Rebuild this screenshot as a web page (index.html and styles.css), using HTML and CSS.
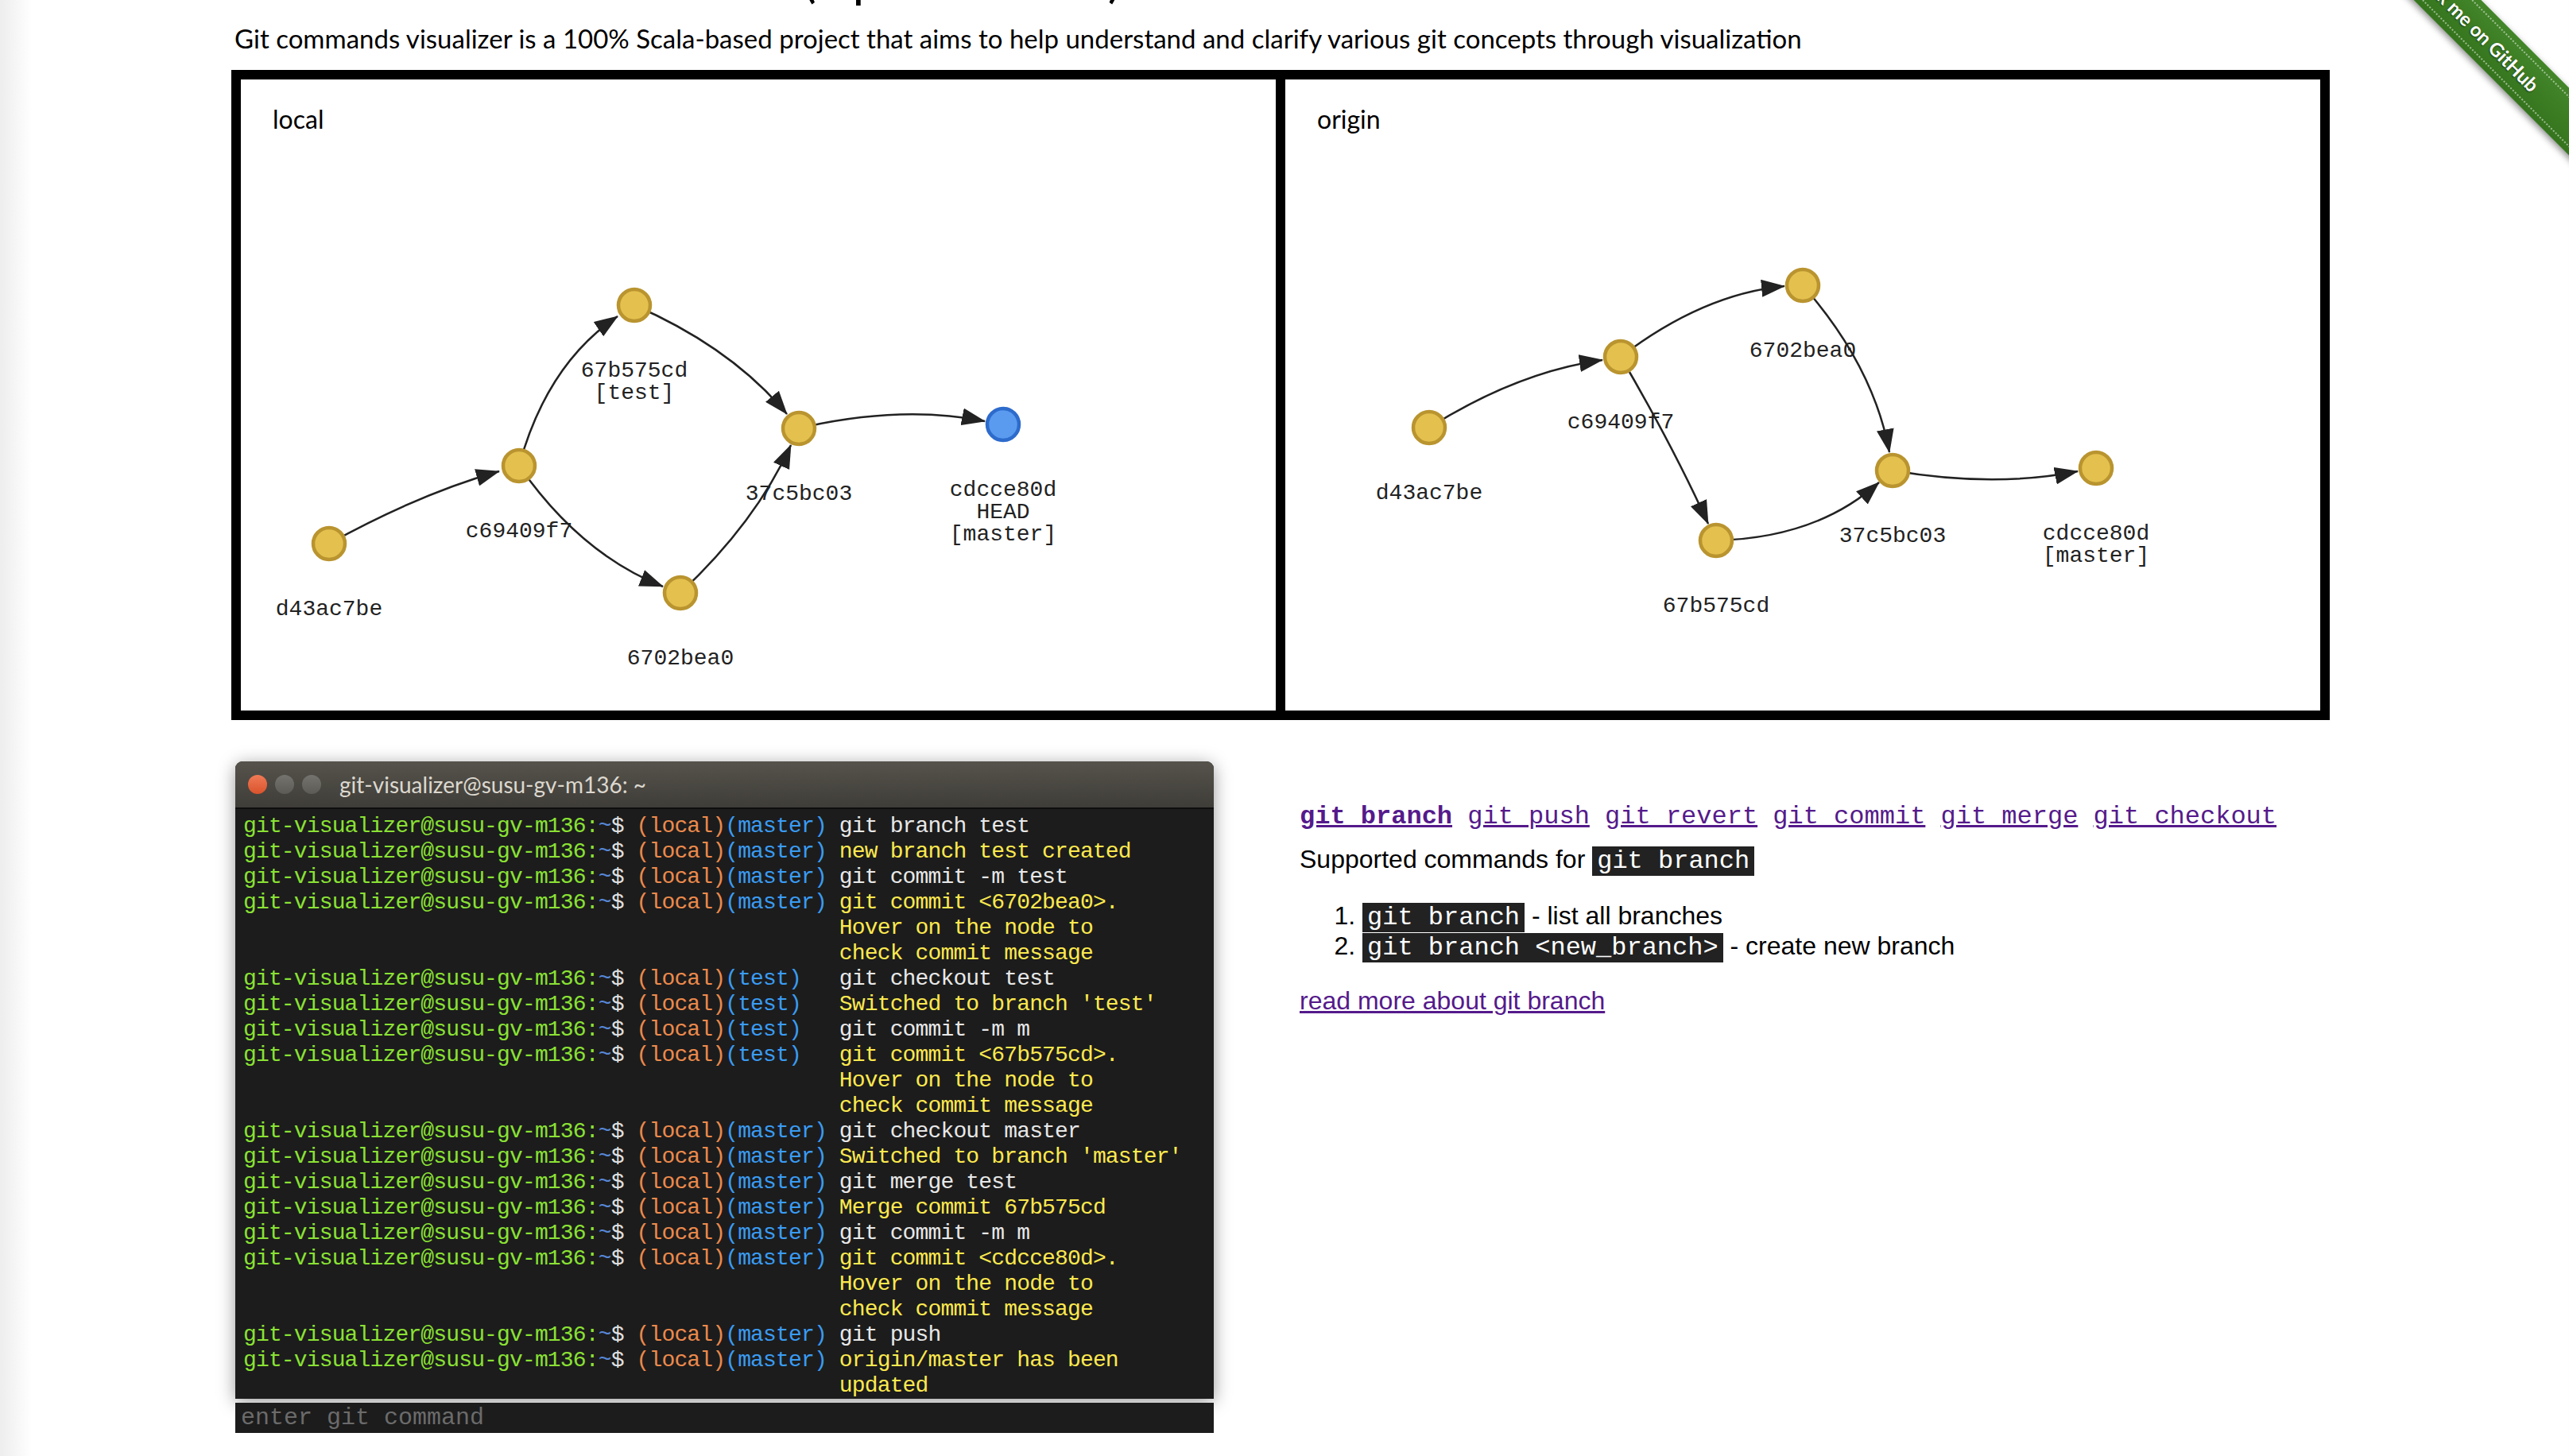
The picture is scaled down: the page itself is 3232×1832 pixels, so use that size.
FILE: index.html
```html
<!DOCTYPE html>
<html lang="en">
<head>
    <meta charset="UTF-8">
    <meta name="viewport" content="width=device-width, initial-scale=1.0">
    <title>Git Commands Visualizer</title>
    <link rel="stylesheet" href="styles.css">
</head>
<body>
    <div class="ribbon-wrap">
        <a class="ribbon" href="#"><span>Fork me on GitHub</span></a>
    </div>

    <div class="page">
        <h1 class="title">Git Commands Visualizer (alpha version)</h1>
        <p class="intro">Git commands visualizer is a 100% Scala-based project that aims to help understand and clarify various git concepts through visualization</p>

        <div class="graphs">
            <div class="panel">
                <div class="panel-name">local</div>
                <svg class="graph" viewBox="0 0 1302 794">
                    <defs>
                        <marker id="arrow" viewBox="0 0 30 22" refX="29" refY="11" markerWidth="30" markerHeight="22" markerUnits="userSpaceOnUse" orient="auto">
                            <path d="M0,0 L30,11 L0,22 Z" fill="#222"/>
                        </marker>
                    </defs>
                    <g class="edges">
                        <path d="M111,584 Q225,521 325,493"/>
                        <path d="M350,486 Q385,358 474,298"/>
                        <path d="M350,486 Q427,597 531,638"/>
                        <path d="M495,284 Q617,337 687,421"/>
                        <path d="M553,646 Q648,557 692,460"/>
                        <path d="M702,439 Q830,409 936,430"/>
                    </g>
                    <g>
                        <circle class="node" cx="111" cy="584" r="20"/>
                        <circle class="node" cx="350" cy="486" r="20"/>
                        <circle class="node" cx="495" cy="284" r="20"/>
                        <circle class="node" cx="553" cy="646" r="20"/>
                        <circle class="node" cx="702" cy="439" r="20"/>
                        <circle class="node head" cx="959" cy="434" r="20"/>
                    </g>
                    <g class="labels">
                        <text x="111" y="674">d43ac7be</text>
                        <text x="350" y="576">c69409f7</text>
                        <text x="495" y="374">67b575cd</text>
                        <text x="495" y="402">[test]</text>
                        <text x="553" y="736">6702bea0</text>
                        <text x="702" y="529">37c5bc03</text>
                        <text x="959" y="524">cdcce80d</text>
                        <text x="959" y="552">HEAD</text>
                        <text x="959" y="580">[master]</text>
                    </g>
                </svg>
            </div>
            <div class="panel">
                <div class="panel-name">origin</div>
                <svg class="graph" viewBox="0 0 1302 794">
                    <g class="edges">
                        <path d="M181,438 Q292,368 399,353"/>
                        <path d="M422,349 Q525,270 628,260"/>
                        <path d="M422,349 Q488,462 532,559"/>
                        <path d="M651,259 Q740,360 760,469"/>
                        <path d="M542,580 Q669,577 747,507"/>
                        <path d="M764,492 Q892,514 997,493"/>
                    </g>
                    <g>
                        <circle class="node" cx="181" cy="438" r="20"/>
                        <circle class="node" cx="422" cy="349" r="20"/>
                        <circle class="node" cx="651" cy="259" r="20"/>
                        <circle class="node" cx="542" cy="580" r="20"/>
                        <circle class="node" cx="764" cy="492" r="20"/>
                        <circle class="node" cx="1020" cy="489" r="20"/>
                    </g>
                    <g class="labels">
                        <text x="181" y="528">d43ac7be</text>
                        <text x="422" y="439">c69409f7</text>
                        <text x="651" y="349">6702bea0</text>
                        <text x="542" y="670">67b575cd</text>
                        <text x="764" y="582">37c5bc03</text>
                        <text x="1020" y="579">cdcce80d</text>
                        <text x="1020" y="607">[master]</text>
                    </g>
                </svg>
            </div>
        </div>

        <div class="lower">
            <div>
                <div class="terminal">
                    <div class="titlebar">
                        <span class="dot close"></span>
                        <span class="dot"></span>
                        <span class="dot"></span>
                        <span class="term-title">git-visualizer@susu-gv-m136: ~</span>
                    </div>
                    <div class="term-body">
                        <div class="term-lines">
                            <span class="prompt"></span><span class="out err">&nbsp;&nbsp;test does not exist</span>

                            <span class="prompt"><span class="user">git-visualizer@susu-gv-m136:</span><span class="tilde">~</span>$ <span class="repo">(local)</span><span class="branch">(master)</span></span><span class="out cmd">git branch test</span>
                            <span class="prompt"><span class="user">git-visualizer@susu-gv-m136:</span><span class="tilde">~</span>$ <span class="repo">(local)</span><span class="branch">(master)</span></span><span class="out msg">new branch test created</span>
                            <span class="prompt"><span class="user">git-visualizer@susu-gv-m136:</span><span class="tilde">~</span>$ <span class="repo">(local)</span><span class="branch">(master)</span></span><span class="out cmd">git commit -m test</span>
                            <span class="prompt"><span class="user">git-visualizer@susu-gv-m136:</span><span class="tilde">~</span>$ <span class="repo">(local)</span><span class="branch">(master)</span></span><span class="out msg">git commit &lt;6702bea0&gt;.<br>Hover on the node to<br>check commit message</span>

                            <span class="prompt"><span class="user">git-visualizer@susu-gv-m136:</span><span class="tilde">~</span>$ <span class="repo">(local)</span><span class="branch">(test)</span></span><span class="out cmd">git checkout test</span>
                            <span class="prompt"><span class="user">git-visualizer@susu-gv-m136:</span><span class="tilde">~</span>$ <span class="repo">(local)</span><span class="branch">(test)</span></span><span class="out msg">Switched to branch 'test'</span>
                            <span class="prompt"><span class="user">git-visualizer@susu-gv-m136:</span><span class="tilde">~</span>$ <span class="repo">(local)</span><span class="branch">(test)</span></span><span class="out cmd">git commit -m m</span>
                            <span class="prompt"><span class="user">git-visualizer@susu-gv-m136:</span><span class="tilde">~</span>$ <span class="repo">(local)</span><span class="branch">(test)</span></span><span class="out msg">git commit &lt;67b575cd&gt;.<br>Hover on the node to<br>check commit message</span>

                            <span class="prompt"><span class="user">git-visualizer@susu-gv-m136:</span><span class="tilde">~</span>$ <span class="repo">(local)</span><span class="branch">(master)</span></span><span class="out cmd">git checkout master</span>
                            <span class="prompt"><span class="user">git-visualizer@susu-gv-m136:</span><span class="tilde">~</span>$ <span class="repo">(local)</span><span class="branch">(master)</span></span><span class="out msg">Switched to branch 'master'</span>
                            <span class="prompt"><span class="user">git-visualizer@susu-gv-m136:</span><span class="tilde">~</span>$ <span class="repo">(local)</span><span class="branch">(master)</span></span><span class="out cmd">git merge test</span>
                            <span class="prompt"><span class="user">git-visualizer@susu-gv-m136:</span><span class="tilde">~</span>$ <span class="repo">(local)</span><span class="branch">(master)</span></span><span class="out msg">Merge commit 67b575cd</span>
                            <span class="prompt"><span class="user">git-visualizer@susu-gv-m136:</span><span class="tilde">~</span>$ <span class="repo">(local)</span><span class="branch">(master)</span></span><span class="out cmd">git commit -m m</span>
                            <span class="prompt"><span class="user">git-visualizer@susu-gv-m136:</span><span class="tilde">~</span>$ <span class="repo">(local)</span><span class="branch">(master)</span></span><span class="out msg">git commit &lt;cdcce80d&gt;.<br>Hover on the node to<br>check commit message</span>

                            <span class="prompt"><span class="user">git-visualizer@susu-gv-m136:</span><span class="tilde">~</span>$ <span class="repo">(local)</span><span class="branch">(master)</span></span><span class="out cmd">git push</span>
                            <span class="prompt"><span class="user">git-visualizer@susu-gv-m136:</span><span class="tilde">~</span>$ <span class="repo">(local)</span><span class="branch">(master)</span></span><span class="out msg">origin/master has been updated</span>
                        </div>
                    </div>
                </div>
                <input type="text" class="cmd-input" placeholder="enter git command">
            </div>

            <div class="help">
                <div class="cmd-nav">
                    <a href="#" class="active">git branch</a> <a href="#">git push</a> <a href="#">git revert</a> <a href="#">git commit</a> <a href="#">git merge</a> <a href="#">git checkout</a>
                </div>
                <p class="supported">Supported commands for <code>git branch</code></p>
                <ol class="usage">
                    <li><code>git branch</code> - list all branches</li>
                    <li><code>git branch &lt;new_branch&gt;</code> - create new branch</li>
                </ol>
                <p class="more"><a href="#">read more about git branch</a></p>
            </div>
        </div>
    </div>
</body>
</html>
```

FILE: styles.css
```css
body {
    margin: 0;
    font-family: Lato, "Open Sans", sans-serif;
    color: #000;
    background: linear-gradient(to right, #ededed 0, #fff 40px);
    overflow: hidden;
}
.page {
    width: 2640px;
    padding-left: 291px;
}
.title {
    margin: -64px 0 0 4px;
    font-size: 64px;
    line-height: 72px;
    font-weight: 400;
}
.intro {
    margin: 22px 0 0 4px;
    font-size: 33px;
    line-height: 36px;
}

/* graphs */
.graphs {
    display: flex;
    box-sizing: border-box;
    height: 818px;
    margin-top: 22px;
    border: 6px solid #000;
}
.panel {
    flex: 1;
    display: grid;
    border: 6px solid #000;
}
.panel > * {
    grid-area: 1 / 1;
}
.panel-name {
    align-self: start;
    justify-self: start;
    padding: 32px 0 0 40px;
    font-size: 32px;
    line-height: 36px;
}
.graph {
    display: block;
    width: 1302px;
    height: 794px;
}
.edges path {
    fill: none;
    stroke: #222;
    stroke-width: 2.5;
    marker-end: url(#arrow);
}
.node {
    fill: #e4c04e;
    stroke: #b9942f;
    stroke-width: 4.5;
}
.node.head {
    fill: #5a9bf0;
    stroke: #2d6bcc;
}
.labels text {
    font-family: "Liberation Mono", monospace;
    font-size: 28px;
    fill: #222;
    text-anchor: middle;
}

/* lower part */
.lower {
    display: grid;
    grid-template-columns: 1320px 1320px;
    margin-top: 52px;
}
.terminal {
    margin-left: 5px;
    width: 1231px;
    background: #1c1c1c;
    border-radius: 9px 9px 0 0;
    box-shadow: 0 4px 22px rgba(0,0,0,0.4);
}
.titlebar {
    position: relative;
    z-index: 1;
    display: flex;
    align-items: center;
    height: 58px;
    padding-left: 16px;
    background: linear-gradient(#56534c, #3f3d38);
    border-radius: 9px 9px 0 0;
    border-bottom: 2px solid #0e0e0e;
}
.dot {
    width: 24px;
    height: 24px;
    margin-right: 10px;
    border-radius: 50%;
    background: linear-gradient(#74736e, #5c5b56);
}
.dot.close {
    background: linear-gradient(#ef7a55, #d9532c);
}
.term-title {
    margin-left: 13px;
    font-size: 28px;
    color: #dcd8cf;
}
.term-body {
    display: flex;
    flex-direction: column;
    justify-content: flex-end;
    height: 742px;
    overflow: hidden;
    padding: 0 30px 0 10px;
    font-family: "Liberation Mono", monospace;
    font-size: 28px;
    line-height: 32px;
    letter-spacing: -0.85px;
    color: #e8e8e8;
}
.term-lines {
    display: grid;
    grid-template-columns: max-content 1fr;
    column-gap: 16px;
}
.prompt {
    white-space: pre;
    color: #e0e0e0;
}
.user { color: #8ae234; }
.tilde { color: #5787d6; }
.repo { color: #ec8a4c; }
.branch { color: #3a9cf4; }
.out.cmd { color: #e8e8e8; }
.out.msg { color: #fce94f; }
.out.err { color: #ef3a28; }
.cmd-input {
    display: block;
    box-sizing: border-box;
    width: 1231px;
    height: 38px;
    margin: 5px 0 0 5px;
    padding: 0 7px;
    border: 0;
    outline: none;
    background: #1c1c1c;
    color: #ddd;
    font-family: "Liberation Mono", monospace;
    font-size: 30px;
}
.cmd-input::placeholder {
    color: #6b6b6b;
}

/* help column */
.help {
    padding: 52px 0 0 24px;
    font-family: "Liberation Sans", Arial, sans-serif;
    font-size: 32px;
}
.help a {
    color: #551a8b;
}
.cmd-nav {
    margin-bottom: 15px;
    font-family: "Liberation Mono", monospace;
    line-height: 36px;
}
.cmd-nav .active {
    font-weight: bold;
}
.help code {
    padding: 0 6px;
    background: #222;
    color: #fff;
    font-family: "Liberation Mono", monospace;
    font-size: 32px;
    line-height: 1;
}
.supported {
    margin: 0;
    line-height: 40px;
}
.usage {
    margin: 32px 0 0;
    padding-left: 79px;
    line-height: 38px;
}
.more {
    margin: 31px 0 0;
    line-height: 38px;
}

/* github ribbon */
.ribbon-wrap {
    position: absolute;
    top: 0;
    right: 0;
    width: 400px;
    height: 400px;
    overflow: hidden;
}
.ribbon {
    position: absolute;
    top: 9px;
    left: 26px;
    width: 520px;
    height: 60px;
    padding: 7px 0;
    box-sizing: border-box;
    transform: rotate(45deg);
    background: linear-gradient(#43862a, #35741d);
    box-shadow: 0 3px 8px rgba(0,0,0,0.45);
    text-align: center;
    text-decoration: none;
    color: #fff;
}
.ribbon span {
    display: block;
    border-top: 2px dotted rgba(255,255,255,0.5);
    border-bottom: 2px dotted rgba(255,255,255,0.5);
    font-size: 24px;
    font-weight: bold;
    line-height: 42px;
    text-shadow: 0 1px 2px rgba(0,0,0,0.6);
}
```
